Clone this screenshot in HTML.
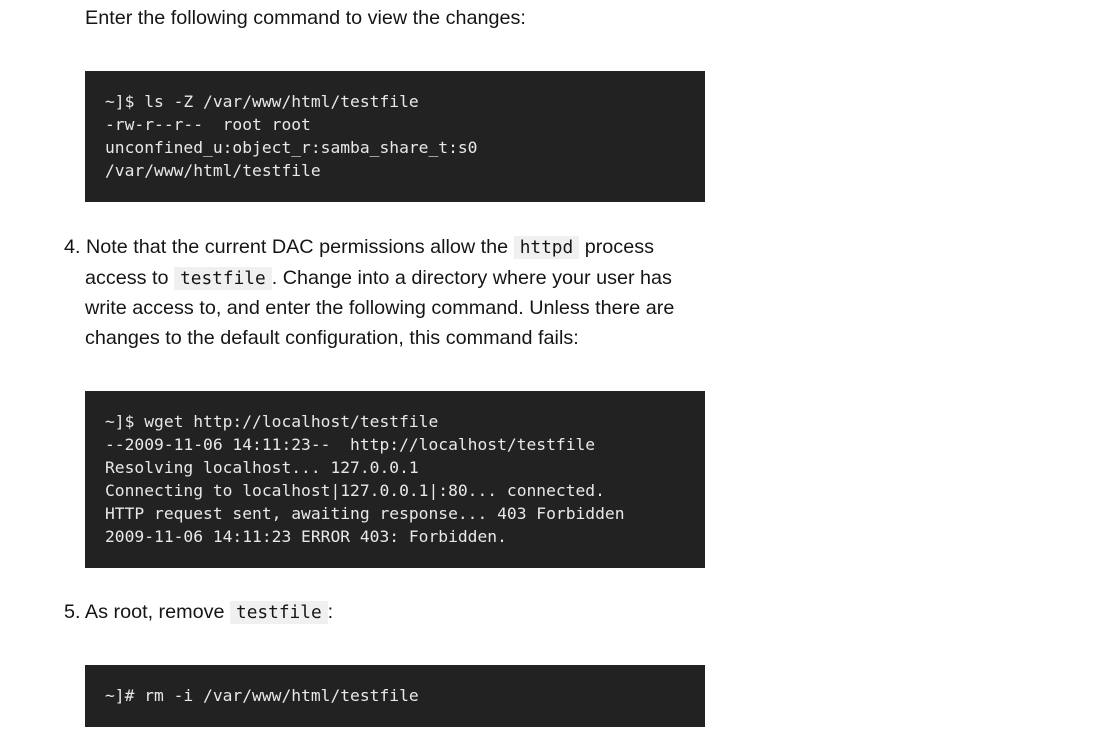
<!DOCTYPE html>
<html><head><style>
body{margin:0;width:1098px;height:745px;background:#fff;position:relative;overflow:hidden;font-family:"Liberation Sans",sans-serif;color:#151515;}
.t{position:absolute;font-size:19.8px;line-height:30px;white-space:nowrap;}
.pre{position:absolute;left:85px;width:620px;background:#222;color:#e8e8e8;font-family:"DejaVu Sans Mono",monospace;font-size:16.3px;line-height:23px;box-sizing:border-box;padding-left:20px;white-space:pre;}
code{font-family:"DejaVu Sans Mono",monospace;font-size:17.8px;background:#f0f0f0;padding:1px 6px;}
</style></head><body>
<div class="t" style="left:85px;top:3px">Enter the following command to view the changes:</div>
<div class="pre" style="top:71px;height:131px;padding-top:19px">~]$ ls -Z /var/www/html/testfile
-rw-r--r--  root root
unconfined_u:object_r:samba_share_t:s0
/var/www/html/testfile</div>
<div class="t" style="left:64px;top:232px">4. Note that the current DAC permissions allow the <code>httpd</code> process</div>
<div class="t" style="left:85px;top:263px">access to <code>testfile</code>. Change into a directory where your user has</div>
<div class="t" style="left:85px;top:293px">write access to, and enter the following command. Unless there are</div>
<div class="t" style="left:85px;top:323px">changes to the default configuration, this command fails:</div>
<div class="pre" style="top:391px;height:177px;padding-top:19px">~]$ wget http://localhost/testfile
--2009-11-06 14:11:23--  http://localhost/testfile
Resolving localhost... 127.0.0.1
Connecting to localhost|127.0.0.1|:80... connected.
HTTP request sent, awaiting response... 403 Forbidden
2009-11-06 14:11:23 ERROR 403: Forbidden.</div>
<div class="t" style="left:64px;top:597px">5. As root, remove <code>testfile</code>:</div>
<div class="pre" style="top:665px;height:62px;padding-top:19px">~]# rm -i /var/www/html/testfile</div>
</body></html>
